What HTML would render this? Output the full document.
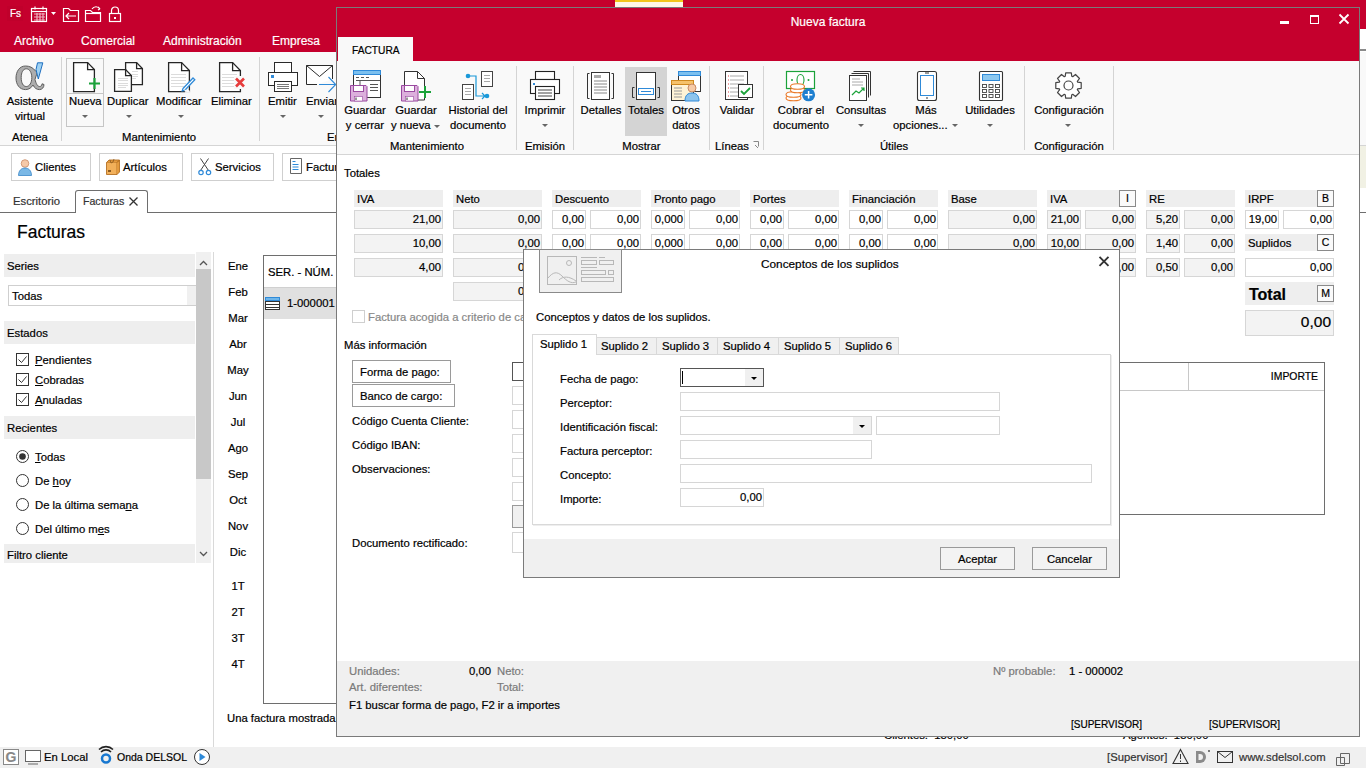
<!DOCTYPE html>
<html><head><meta charset="utf-8">
<style>
*{box-sizing:border-box;margin:0;padding:0}
html,body{width:1366px;height:768px;overflow:hidden}
body{position:relative;background:#fff;font-family:"Liberation Sans",sans-serif;font-size:11.3px;color:#000;-webkit-text-stroke:0.2px currentColor}
.a{position:absolute}
.t{position:absolute;white-space:nowrap;line-height:14px}
.w{color:#fff}
.g{color:#777}
.c{text-align:center}
.r{text-align:right}
.hd{position:absolute;background:#eeeeee}
.fld{position:absolute;border:1px solid #d6d6d6;background:#fff;height:19px;line-height:17px;text-align:right;padding-right:1px;white-space:nowrap}
.ro{background:#f3f3f3}
.btn{position:absolute;border:1px solid #adadad;background:#f0f0f0;text-align:center;white-space:nowrap}
.sep{position:absolute;width:1px;background:#d4d4d4}
.arr{position:absolute;width:0;height:0;border-left:3px solid transparent;border-right:3px solid transparent;border-top:3px solid #666}
svg{position:absolute;overflow:visible}
</style></head><body>

<!-- ============ BACKGROUND APP ============ -->
<div class="a" style="left:0;top:0;width:1366px;height:52px;background:#c5002d"></div>
<div class="a" style="left:615px;top:0;width:68px;height:7px;background:#fff8e6"></div>
<div class="a" style="left:615px;top:0;width:68px;height:2px;background:#f2c51b"></div>
<!-- quick access -->
<div class="a" style="left:7px;top:6px;width:16px;height:15px;background:#c0002b"></div>
<div class="t w" style="left:10px;top:7px;font-size:10px;line-height:14px">Fs</div>
<svg style="left:0;top:0" width="130" height="30">
 <g fill="none" stroke="#fff" stroke-width="1.2">
  <rect x="31.5" y="8.5" width="15" height="13"/><line x1="31.5" y1="11.5" x2="46.5" y2="11.5"/>
  <line x1="35" y1="6.5" x2="35" y2="9.5"/><line x1="43" y1="6.5" x2="43" y2="9.5"/>
  <path d="M34 14h11M34 17h11M34 20h11M37 13v8M40 13v8M43 13v8" stroke-opacity=".7"/>
  <path d="M63.5 21.5v-13h5l2 2h8v11z"/><path d="M76 16h-10M69 13l-3 3 3 3"/>
  <path d="M85.5 21.5v-11h5l2 2h8v9z"/><path d="M86 13.5h14"/><path d="M92 9c2-3 6-3 8 0M100 9l-2-2M100 9l-2 1"/>
  <rect x="109.5" y="13.5" width="11" height="8"/><path d="M111.5 13.5v-3a3.5 3.5 0 0 1 7 0v3"/>
 </g>
 <path d="M51 12h5l-2.5 3z" fill="#fff"/>
 <rect x="114" y="17" width="2" height="2" fill="#fff"/>
</svg>
<div class="t w" style="left:14px;top:34px;font-size:12px">Archivo</div>
<div class="t w" style="left:81px;top:34px;font-size:12px">Comercial</div>
<div class="t w" style="left:163px;top:34px;font-size:12px">Administración</div>
<div class="t w" style="left:272px;top:34px;font-size:12px">Empresa</div>

<!-- ribbon -->
<div class="a" style="left:0;top:52px;width:1366px;height:94px;background:#f9f9f9;border-bottom:1px solid #d5d5d5"></div>
<div class="sep" style="left:61px;top:57px;height:84px"></div>
<div class="sep" style="left:259px;top:57px;height:84px"></div>
<div class="a" style="left:66px;top:58px;width:38px;height:69px;border:1px solid #c6c6c6"></div>
<div class="a" style="left:67px;top:93px;width:36px;height:1px;background:#c6c6c6"></div>
<div class="t c" style="left:0;top:94px;width:60px">Asistente</div>
<div class="t c" style="left:0;top:109px;width:60px">virtual</div>
<div class="t c" style="left:0;top:130px;width:60px">Atenea</div>
<div class="t" style="left:69px;top:94px">Nueva</div>
<div class="t" style="left:107px;top:94px">Duplicar</div>
<div class="t" style="left:156px;top:94px">Modificar</div>
<div class="t" style="left:211px;top:94px">Eliminar</div>
<div class="t" style="left:268px;top:94px">Emitir</div>
<div class="t" style="left:306px;top:94px">Enviar</div>
<div class="t" style="left:122px;top:130px">Mantenimiento</div>
<div class="t" style="left:327px;top:130px">En</div>
<div class="arr" style="left:82px;top:115px"></div>
<div class="arr" style="left:126px;top:115px"></div>
<div class="arr" style="left:178px;top:115px"></div>
<div class="arr" style="left:280px;top:115px"></div>
<div class="arr" style="left:318px;top:115px"></div>
<svg style="left:0;top:0" width="340" height="100">
 <!-- alpha -->
 <path fill-rule="evenodd" d="M35.5 71C33 67.5 29.5 66 25.5 66C19.5 66 16 71.5 16 78C16 84.5 19.5 89.6 25.5 89.6C29 89.6 31.5 87.5 33 85C34.5 88 36.5 89.6 39.5 89.6C42 89.6 44 87.5 44 84.5L42 83.8C42 85.5 41 86.5 39.5 86.5C37.5 86.5 36 83.5 35 79.5C36 76 37 73 38 71ZM26.3 68.8C23 68.8 21.2 72.5 21.2 77.6C21.2 82.8 23 86.5 26.3 86.5C29.5 86.5 31.8 82.8 31.8 77.6C31.8 72.5 29.5 68.8 26.3 68.8Z" fill="#adadad" stroke="#5e5e5e" stroke-width="1"/>
 <path d="M37.5 62.8H42.8L38.3 79L36 69.5Z" fill="#9fd2f3" stroke="#1f6fc0" stroke-width="1"/>
 <!-- docs -->
 <g fill="#fff" stroke="#262626" stroke-width="1.3">
  <path d="M73.6 62.6h14l6.8 7v22h-20.8z"/><path d="M87.6 62.6v7h6.8" fill="none"/>
  <path d="M125.6 62.6h11l5.8 6v16h-16.8z"/><path d="M136.6 62.6v6h5.8" fill="none"/>
  <path d="M114.6 69.6h11l5.8 6v15.8h-16.8z"/><path d="M125.6 69.6v6h5.8" fill="none"/>
  <path d="M168.6 62.6h13l7.8 8v21h-20.8z"/><path d="M181.6 62.6v8h7.8" fill="none"/>
  <path d="M219.6 62.6h13l7.8 8v21h-20.8z"/><path d="M232.6 62.6v8h7.8" fill="none"/>
 </g>
 <g stroke="#dcdcdc" stroke-width="1"><path d="M171 74.5h15M171 77.5h15M171 80.5h15M171 83.5h15M171 86.5h15M222 74.5h15M222 77.5h15M222 80.5h15M222 83.5h15M222 86.5h15M118 78.5h10M118 80.5h10M118 83.5h10M118 85.5h10M118 87.5h8M132 71.5h6M132 74.5h6M132 76.5h6M132 78.5h4"/></g>
 <path d="M89 83.5h11M94.5 78v11" stroke="#1ba23a" stroke-width="2.2"/>
 <path d="M183 88.5l10-10.5 1.8 1.8-10 10.5-2.6.6z" fill="#fff" stroke="#2f8ad8" stroke-width="1.3"/>
 <path d="M185 92h5M184.5 90.5l5 .5" stroke="#f9f9f9" stroke-width="1.6"/>
 <rect x="234" y="76" width="13" height="13" fill="#f9f9f9"/>
 <path d="M236 78.5l8 8M244 78.5l-8 8" stroke="#e63b3b" stroke-width="2.6"/>
 <!-- printer -->
 <g fill="#fff" stroke="#2a2a2a" stroke-width="1">
  <rect x="274.5" y="62.5" width="17" height="10"/><rect x="268.5" y="72.5" width="29" height="13"/><rect x="274.5" y="81.5" width="17" height="10"/>
 </g>
 <path d="M277 84.5h12M277 86.5h12M277 88.5h12" stroke="#555" stroke-width=".8"/>
 <rect x="271" y="75" width="3" height="3" fill="#2f8ad8"/>
 <!-- envelope -->
 <path d="M317 84.5h-10.5v-19h26v13.5" fill="#fff" stroke="#2a2a2a" stroke-width="1"/>
 <path d="M306.5 65.5l13 11 13-11" fill="none" stroke="#2a2a2a" stroke-width="1"/>
 <path d="M319 84.5h16.5M328.5 77l7.2 7.5-7.2 7.5" fill="none" stroke="#2f8ad8" stroke-width="1.1"/>
</svg>

<div class="a" style="left:1360px;top:29px;width:6px;height:20px;background:#fff"></div>
<div class="a" style="left:1360px;top:49px;width:6px;height:2px;background:#8a8a8a"></div>
<div class="a" style="left:1360px;top:51px;width:6px;height:1px;background:#fff"></div>
<div class="a" style="left:1360px;top:146px;width:6px;height:42px;background:#f1f1e4"></div>
<!-- shortcut buttons -->
<div class="a" style="left:11px;top:153px;width:80px;height:28px;border:1px solid #cfcfcf;background:#fff"></div>
<div class="a" style="left:99px;top:153px;width:84px;height:28px;border:1px solid #cfcfcf;background:#fff"></div>
<div class="a" style="left:191px;top:153px;width:83px;height:28px;border:1px solid #cfcfcf;background:#fff"></div>
<div class="a" style="left:282px;top:153px;width:70px;height:28px;border:1px solid #cfcfcf;background:#fff"></div>
<div class="t" style="left:35px;top:160px">Clientes</div>
<div class="t" style="left:123px;top:160px">Artículos</div>
<div class="t" style="left:215px;top:160px">Servicios</div>
<div class="t" style="left:306px;top:160px">Facturas</div>
<svg style="left:0;top:150px" width="340" height="35">
 <circle cx="25" cy="13.5" r="3.8" fill="#f6c9a8" stroke="#c98a64" stroke-width=".8"/>
 <path d="M18.5 25.5c0-5 3-7.5 6.5-7.5s6.5 2.5 6.5 7.5z" fill="#7ab8e6" stroke="#3a86c8" stroke-width=".8"/>
 <path d="M106.5 12.5h10.5v12h-10.5z" fill="#f2b05a" stroke="#b57022" stroke-width=".9"/>
 <path d="M106.5 12.5l2.5-2.5h10.5l-2.5 2.5M117 12.5l2.5-2.5v12l-2.5 2.5" fill="#e39a3e" stroke="#b57022" stroke-width=".9"/>
 <path d="M110 10l1 3 2-1 1-3" fill="none" stroke="#8a5a20" stroke-width=".8"/>
 <rect x="108" y="20" width="3" height="2" fill="#8a5a20"/>
 <path d="M200.5 8.5l8 12M208.5 8.5l-8 12" stroke="#444" stroke-width="1"/>
 <circle cx="201" cy="22.5" r="2.2" fill="none" stroke="#2f8ad8" stroke-width="1.2"/>
 <circle cx="208.5" cy="22.5" r="2.2" fill="none" stroke="#2f8ad8" stroke-width="1.2"/>
 <path d="M290.5 8.5h11v15h-11z" fill="#fff" stroke="#666"/>
 <path d="M292.5 11.5h3M292.5 14.5h6M292.5 17h6M292.5 19.5h6" stroke="#2f8ad8"/>
</svg>

<!-- tabs -->
<div class="a" style="left:0;top:212px;width:1366px;height:1px;background:#6e6e6e"></div>
<div class="a" style="left:75px;top:190px;width:73px;height:23px;border:1px solid #6e6e6e;border-bottom:none;border-radius:3px 3px 0 0;background:#fff"></div>
<div class="t" style="left:13px;top:194px;color:#333">Escritorio</div>
<div class="t" style="left:83px;top:194px;color:#333;font-size:10.6px">Facturas</div>
<svg style="left:0;top:190px" width="150" height="25"><path d="M129.5 7.5l8 8M137.5 7.5l-8 8" stroke="#333" stroke-width="1.3"/></svg>
<div class="t" style="left:17px;top:222px;font-size:17.5px;line-height:20px">Facturas</div>

<!-- left panel -->
<div class="hd" style="left:4px;top:254px;width:191px;height:23px"></div>
<div class="t" style="left:7px;top:259px">Series</div>
<div class="a" style="left:8px;top:285px;width:188px;height:21px;border:1px solid #cfcfcf;background:#fff"></div>
<div class="a" style="left:187px;top:286px;width:9px;height:19px;background:#f0f0f0"></div>
<div class="t" style="left:12px;top:289px">Todas</div>
<div class="hd" style="left:4px;top:321px;width:191px;height:23px"></div>
<div class="t" style="left:7px;top:326px">Estados</div>
<div class="hd" style="left:4px;top:416px;width:191px;height:23px"></div>
<div class="t" style="left:7px;top:421px">Recientes</div>
<div class="hd" style="left:4px;top:544px;width:191px;height:19px"></div>
<div class="t" style="left:7px;top:548px">Filtro cliente</div>
<!-- scrollbar -->
<div class="a" style="left:196px;top:252px;width:15px;height:311px;background:#f0f0f0"></div>
<div class="a" style="left:196px;top:269px;width:15px;height:210px;background:#c8c8c8"></div>
<svg style="left:196px;top:252px" width="15" height="311">
 <path d="M4 13l3.5-3.5 3.5 3.5" fill="none" stroke="#555" stroke-width="1.3"/>
 <path d="M4 300l3.5 3.5 3.5-3.5" fill="none" stroke="#555" stroke-width="1.3"/>
</svg>
<div class="a" style="left:213px;top:252px;width:1px;height:495px;background:#d9d9d9"></div>
<!-- checkboxes -->
<svg style="left:0;top:340px" width="40" height="200">
 <g fill="#fff" stroke="#333" stroke-width="1">
  <rect x="16.5" y="13.5" width="12" height="12"/><rect x="16.5" y="33.5" width="12" height="12"/><rect x="16.5" y="53.5" width="12" height="12"/>
  <circle cx="22.5" cy="116.5" r="6"/><circle cx="22.5" cy="140.5" r="6"/><circle cx="22.5" cy="164.5" r="6"/><circle cx="22.5" cy="188.5" r="6"/>
 </g>
 <path d="M18.5 19.5l3 3 5-6M18.5 39.5l3 3 5-6M18.5 59.5l3 3 5-6" fill="none" stroke="#333" stroke-width="1"/>
 <circle cx="22.5" cy="116.5" r="3.3" fill="#333"/>
</svg>
<div class="t" style="left:35px;top:353px"><u>P</u>endientes</div>
<div class="t" style="left:35px;top:373px"><u>C</u>obradas</div>
<div class="t" style="left:35px;top:393px"><u>A</u>nuladas</div>
<div class="t" style="left:35px;top:450px"><u>T</u>odas</div>
<div class="t" style="left:35px;top:474px">De <u>h</u>oy</div>
<div class="t" style="left:35px;top:498px">De la última sema<u>n</u>a</div>
<div class="t" style="left:35px;top:522px">Del último m<u>e</u>s</div>

<!-- months -->
<div class="t c" style="left:218px;top:259px;width:40px">Ene</div>
<div class="t c" style="left:218px;top:285px;width:40px">Feb</div>
<div class="t c" style="left:218px;top:311px;width:40px">Mar</div>
<div class="t c" style="left:218px;top:337px;width:40px">Abr</div>
<div class="t c" style="left:218px;top:363px;width:40px">May</div>
<div class="t c" style="left:218px;top:389px;width:40px">Jun</div>
<div class="t c" style="left:218px;top:415px;width:40px">Jul</div>
<div class="t c" style="left:218px;top:441px;width:40px">Ago</div>
<div class="t c" style="left:218px;top:467px;width:40px">Sep</div>
<div class="t c" style="left:218px;top:493px;width:40px">Oct</div>
<div class="t c" style="left:218px;top:519px;width:40px">Nov</div>
<div class="t c" style="left:218px;top:545px;width:40px">Dic</div>
<div class="t c" style="left:218px;top:579px;width:40px">1T</div>
<div class="t c" style="left:218px;top:605px;width:40px">2T</div>
<div class="t c" style="left:218px;top:631px;width:40px">3T</div>
<div class="t c" style="left:218px;top:657px;width:40px">4T</div>

<!-- grid -->
<div class="a" style="left:263px;top:255px;width:100px;height:449px;border:1px solid #6e6e6e;background:#fff"></div>
<div class="a" style="left:264px;top:287px;width:99px;height:1px;background:#d0d0d0"></div>
<div class="a" style="left:264px;top:288px;width:99px;height:31px;background:#e0e0e0"></div>
<div class="t" style="left:268px;top:265px">SER. - NÚM.</div>
<div class="t" style="left:287px;top:296px">1-000001</div>
<svg style="left:264px;top:295px" width="20" height="20">
 <rect x="1.5" y="2.5" width="14" height="12" fill="#fff" stroke="#333"/>
 <path d="M1.5 6.5h14M1.5 9.5h14M1.5 12.5h14" stroke="#333"/>
 <rect x="1.5" y="2.5" width="14" height="3" fill="#6fb6ea" stroke="#2f8ad8"/>
</svg>
<div class="t" style="left:227px;top:711px">Una factura mostrada</div>
<div class="t" style="left:884px;top:728px">Clientes:&nbsp;&nbsp;150,00</div>
<div class="t" style="left:1123px;top:728px">Agentes:&nbsp;&nbsp;150,00</div>

<!-- status bar -->
<div class="a" style="left:0;top:747px;width:1366px;height:21px;background:#f0f0f0"></div>
<div class="a" style="left:3px;top:749px;width:16px;height:16px;border:1px solid #888;background:#fff"></div>
<div class="t" style="left:4px;top:749px;font-size:14px;line-height:16px;color:#888;width:14px;text-align:center;font-weight:bold">G</div>
<svg style="left:0;top:745px" width="220" height="23">
 <rect x="25.5" y="5.5" width="15" height="11" fill="#fff" stroke="#666"/>
 <path d="M28 19h10" stroke="#666"/>
 <circle cx="106" cy="13.5" r="4" fill="none" stroke="#1878d0" stroke-width="2.5"/>
 <path d="M101 7a7 7 0 0 1 10 0M99 4.5a10 10 0 0 1 14 0" fill="none" stroke="#222" stroke-width="1.6"/>
 <circle cx="202" cy="12" r="7.5" fill="#fff" stroke="#333"/>
 <path d="M199.5 8v8l6-4z" fill="#2f8ad8"/>
</svg>
<div class="t" style="left:44px;top:750px">En Local</div>
<div class="t" style="left:117px;top:750px;font-size:10.5px">Onda DELSOL</div>
<div class="t" style="left:1107px;top:750px;color:#333">[Supervisor]</div>
<div class="t" style="left:1239px;top:750px;color:#333">www.sdelsol.com</div>
<svg style="left:1160px;top:745px" width="206" height="23">
 <path d="M20.5 4.5l7.5 14h-15z" fill="none" stroke="#333" stroke-width="1.1"/><path d="M20.5 9v5M20.5 15.5v1.5" stroke="#333"/>
 <path d="M36 6h4a6 6 0 0 1 0 12h-4z" fill="#8a8a8a"/><path d="M38.5 9h1.5a3 3 0 0 1 0 6h-1.5z" fill="#f0f0f0"/><rect x="48" y="5" width="2" height="2" fill="#777"/>
 <rect x="57.5" y="6.5" width="15" height="11" fill="none" stroke="#333"/><path d="M57.5 6.5l7.5 6 7.5-6" fill="none" stroke="#333"/>
 <path d="M180.5 8.5h9v10h-9zM176.5 12.5h8v8h-8z" fill="#f0f0f0" stroke="#666"/>
</svg>

<!-- ============ DIALOG NUEVA FACTURA ============ -->
<div class="a" style="left:336px;top:7px;width:1024px;height:730px;border:1px solid #7a7a7a;background:#fff"></div>
<div class="a" style="left:337px;top:8px;width:1022px;height:53px;background:#c5002d"></div>
<div class="t w c" style="left:337px;top:15px;width:982px;font-size:12px">Nueva factura</div>
<div class="a" style="left:1280px;top:21px;width:9px;height:3px;background:#fff"></div>
<div class="a" style="left:1310px;top:15px;width:9px;height:9px;border:1px solid #fff;border-top-width:2px"></div>
<svg style="left:1330px;top:8px" width="30" height="30"><path d="M9.5 6.5l9 9M18.5 6.5l-9 9" stroke="#fff" stroke-width="1.8"/></svg>
<div class="a" style="left:338px;top:37px;width:75px;height:24px;background:#f9f9f9"></div>
<div class="t" style="left:352px;top:44px;font-size:10.2px">FACTURA</div>
<!-- ribbon -->
<div class="a" style="left:337px;top:61px;width:1022px;height:94px;background:#f9f9f9;border-bottom:1px solid #d5d5d5"></div>
<div class="sep" style="left:516px;top:66px;height:84px"></div>
<div class="sep" style="left:573px;top:66px;height:84px"></div>
<div class="sep" style="left:709px;top:66px;height:84px"></div>
<div class="sep" style="left:763px;top:66px;height:84px"></div>
<div class="sep" style="left:1024px;top:66px;height:84px"></div>
<div class="sep" style="left:1113px;top:66px;height:84px"></div>
<div class="a" style="left:625px;top:67px;width:42px;height:69px;background:#d4d4d4"></div>
<div class="t c" style="left:335px;top:103px;width:60px">Guardar</div>
<div class="t c" style="left:335px;top:118px;width:60px">y cerrar</div>
<div class="t c" style="left:386px;top:103px;width:60px">Guardar</div>
<div class="t" style="left:391px;top:118px">y nueva</div>
<div class="arr" style="left:434px;top:125px"></div>
<div class="t c" style="left:438px;top:103px;width:80px">Historial del</div>
<div class="t c" style="left:438px;top:118px;width:80px">documento</div>
<div class="t c" style="left:518px;top:103px;width:54px">Imprimir</div>
<div class="arr" style="left:542px;top:124px"></div>
<div class="t c" style="left:577px;top:103px;width:48px">Detalles</div>
<div class="t c" style="left:622px;top:103px;width:48px">Totales</div>
<div class="t c" style="left:665px;top:103px;width:42px">Otros</div>
<div class="t c" style="left:665px;top:118px;width:42px">datos</div>
<div class="t c" style="left:712px;top:103px;width:50px">Validar</div>
<div class="t c" style="left:766px;top:103px;width:70px">Cobrar el</div>
<div class="t c" style="left:766px;top:118px;width:70px">documento</div>
<div class="t c" style="left:831px;top:103px;width:60px">Consultas</div>
<div class="arr" style="left:858px;top:124px"></div>
<div class="t c" style="left:896px;top:103px;width:60px">Más</div>
<div class="t" style="left:893px;top:118px">opciones...</div>
<div class="arr" style="left:952px;top:124px"></div>
<div class="t c" style="left:960px;top:103px;width:60px">Utilidades</div>
<div class="arr" style="left:987px;top:124px"></div>
<div class="t c" style="left:1026px;top:103px;width:86px">Configuración</div>
<div class="arr" style="left:1065px;top:124px"></div>
<div class="t c" style="left:338px;top:139px;width:178px">Mantenimiento</div>
<div class="t c" style="left:517px;top:139px;width:56px">Emisión</div>
<div class="t c" style="left:574px;top:139px;width:135px">Mostrar</div>
<div class="t" style="left:715px;top:139px">Líneas</div>
<div class="t c" style="left:764px;top:139px;width:260px">Útiles</div>
<div class="t c" style="left:1025px;top:139px;width:88px">Configuración</div>
<svg style="left:0;top:0" width="1366" height="160">
 <!-- dialog launcher -->
 <path d="M753.5 141.5h5v5M755 145l3 3" fill="none" stroke="#888"/>
 <!-- guardar y cerrar -->
 <rect x="353.5" y="70.5" width="27" height="27" fill="#fff" stroke="#333"/>
 <rect x="353.5" y="70.5" width="27" height="4" fill="#7cc0ef" stroke="#2f8ad8"/>
 <path d="M356 77.5h3M361 77.5h3M366 77.5h3M356 80.5h24M360 80.5v6M370 84.5h8M370 87.5h8M370 90.5h8" stroke="#555"/>
 <path d="M350.5 85.5h15.5l1 1v14.5h-16.5z" fill="#dcb0dc" stroke="#9a4aa0"/>
 <rect x="353.5" y="85.5" width="10" height="6" fill="#fff" stroke="#9a4aa0"/><rect x="354.5" y="96.5" width="8" height="4.5" fill="#fff" stroke="#9a4aa0" stroke-width=".6"/><path d="M356 97.5v2.5" stroke="#333"/>
 <!-- guardar y nueva -->
 <path d="M404.5 71.5h13l7 7v21.5h-20z" fill="#fff" stroke="#333"/><path d="M417.5 71.5v7h7" fill="none" stroke="#333"/>
 <path d="M401.5 85.5h15.5l1 1v14.5h-16.5z" fill="#dcb0dc" stroke="#9a4aa0"/>
 <rect x="404.5" y="85.5" width="10" height="6" fill="#fff" stroke="#9a4aa0"/><rect x="405.5" y="96.5" width="8" height="4.5" fill="#fff" stroke="#9a4aa0" stroke-width=".6"/><path d="M407 97.5v2.5" stroke="#333"/>
 <path d="M419 92h12M425 86v12" stroke="#1ba23a" stroke-width="2"/>
 <!-- historial -->
 <rect x="462.5" y="84.5" width="11" height="15" fill="#fff" stroke="#444"/>
 <rect x="481.5" y="71.5" width="11" height="15" fill="#fff" stroke="#444"/>
 <path d="M465 88.5h6M465 91.5h6M465 94.5h6M484 75.5h6M484 78.5h6M484 81.5h6" stroke="#aaa"/>
 <circle cx="468" cy="76" r="2.3" fill="#1a98d8"/><circle cx="487" cy="96" r="2.3" fill="#1a98d8"/>
 <path d="M468 76h8v20h10M482 93l3 3-3 3" fill="none" stroke="#1a98d8" stroke-width="1.2"/>
 <!-- imprimir -->
 <g fill="#fff" stroke="#222" stroke-width="1.1">
  <rect x="535.5" y="71.5" width="19" height="8"/><rect x="530.5" y="79.5" width="29" height="14"/><rect x="535.5" y="86.5" width="19" height="13"/>
 </g>
 <path d="M538 90h14M538 93h14M538 96h14" stroke="#444"/>
 <rect x="533" y="83" width="2" height="2" fill="#2f8ad8"/>
 <!-- detalles -->
 <path d="M589.5 73.5h-2v25h2M611.5 73.5h2v25h-2" fill="none" stroke="#333"/>
 <rect x="591.5" y="72.5" width="18" height="27" fill="#fff" stroke="#333"/>
 <rect x="594" y="75" width="7" height="3" fill="#aaa"/>
 <path d="M594 81h13M594 84h13M594 87h13M594 90h13M594 93h13" stroke="#888"/>
 <!-- totales -->
 <path d="M634.5 87.5h-2v10h2M657.5 87.5h2v10h-2" fill="none" stroke="#333"/>
 <rect x="636.5" y="72.5" width="19" height="27" fill="#fff" stroke="#333"/>
 <rect x="638.5" y="88.5" width="15" height="6" fill="#fff" stroke="#2f8ad8"/>
 <path d="M641 91.5h10" stroke="#2f8ad8"/>
 <!-- otros datos -->
 <rect x="678.5" y="71.5" width="22" height="20" fill="#fff" stroke="#333"/>
 <rect x="678.5" y="71.5" width="22" height="4" fill="#7cc0ef" stroke="#2f8ad8"/>
 <rect x="671.5" y="80.5" width="22" height="20" fill="#fff3d6" stroke="#333"/>
 <rect x="671.5" y="80.5" width="22" height="4" fill="#f6c26b" stroke="#d08a20"/>
 <path d="M674 88h8M674 91h8M674 94h8M674 97h8" stroke="#999"/>
 <circle cx="692" cy="88" r="4" fill="#f6cba8" stroke="#c98a64"/>
 <path d="M685 101c0-6 3-8 7-8s7 2 7 8z" fill="#8dc4ee" stroke="#2f8ad8"/>
 <!-- validar -->
 <rect x="725.5" y="71.5" width="22" height="28" fill="#fff" stroke="#333"/>
 <path d="M730 76h14M730 80h14M730 84h14M730 88h10M730 92h10M730 96h10" stroke="#aaa"/>
 <path d="M728 76h1M728 80h1M728 84h1M728 88h1M728 92h1M728 96h1" stroke="#d44"/>
 <rect x="738.5" y="84.5" width="14" height="13" fill="#fff" stroke="#333"/>
 <path d="M741 91l3 3 6-6" fill="none" stroke="#1ba23a" stroke-width="1.8"/>
 <!-- cobrar -->
 <rect x="786.5" y="71.5" width="28" height="17" fill="#fff" stroke="#1ba23a" stroke-width="1.2"/>
 <ellipse cx="800.5" cy="80" rx="3.5" ry="5.5" fill="none" stroke="#1ba23a" stroke-width="1.1"/>
 <circle cx="792" cy="80" r="1" fill="#1ba23a"/><circle cx="808.5" cy="80" r="1" fill="#1ba23a"/>
 <g fill="#fff" stroke="#ea7a2a" stroke-width="1.1"><ellipse cx="793.5" cy="98" rx="7.5" ry="2.8"/><ellipse cx="793.5" cy="94.5" rx="7.5" ry="2.8"/><ellipse cx="797.5" cy="90" rx="7" ry="2.8"/><ellipse cx="797.5" cy="86.5" rx="7" ry="2.8"/></g>
 <circle cx="808.6" cy="94.8" r="6.5" fill="#1e7fd0"/>
 <path d="M804.8 94.8h7.6M808.6 91v7.6" stroke="#fff" stroke-width="1.5"/>
 <!-- consultas -->
 <path d="M853.5 71.5h17v24M851.5 73.5h17v24" fill="none" stroke="#333"/>
 <rect x="849.5" y="75.5" width="17" height="25" fill="#fff" stroke="#333"/>
 <path d="M852 79h8M852 82h11M852 85h11" stroke="#aaa"/>
 <path d="M852 95l4-4 3 2 5-5M861 88h3v3" fill="none" stroke="#1ba23a" stroke-width="1.2"/>
 <!-- mas opciones -->
 <rect x="917.5" y="71.5" width="19" height="29" rx="2" fill="#fff" stroke="#333" stroke-width="1.1"/>
 <rect x="920.5" y="75.5" width="13" height="20" fill="#fff" stroke="#2f8ad8"/>
 <path d="M925 73h4M926 98h2" stroke="#333"/>
 <!-- utilidades -->
 <rect x="979.5" y="71.5" width="23" height="29" rx="1" fill="#fff" stroke="#333" stroke-width="1.1"/>
 <rect x="982.5" y="74.5" width="17" height="6" fill="#8cc8f0" stroke="#2f8ad8"/>
 <g fill="none" stroke="#444" stroke-width=".9"><rect x="982.5" y="84.5" width="4" height="3"/><rect x="989" y="84.5" width="4" height="3"/><rect x="995.5" y="84.5" width="4" height="3"/><rect x="982.5" y="89.5" width="4" height="3"/><rect x="989" y="89.5" width="4" height="3"/><rect x="995.5" y="89.5" width="4" height="3"/><rect x="982.5" y="94.5" width="4" height="3"/><rect x="989" y="94.5" width="4" height="3"/><rect x="995.5" y="94.5" width="4" height="3"/></g>
 <!-- config gear -->
 <path d="M1077.7 82.2 L1081.2 82.7 L1081.2 88.3 L1077.7 88.8 L1077.3 89.7 L1079.5 92.5 L1075.5 96.5 L1072.7 94.3 L1071.8 94.7 L1071.3 98.2 L1065.7 98.2 L1065.2 94.7 L1064.3 94.3 L1061.5 96.5 L1057.5 92.5 L1059.7 89.7 L1059.3 88.8 L1055.8 88.3 L1055.8 82.7 L1059.3 82.2 L1059.7 81.3 L1057.5 78.5 L1061.5 74.5 L1064.3 76.7 L1065.2 76.3 L1065.7 72.8 L1071.3 72.8 L1071.8 76.3 L1072.7 76.7 L1075.5 74.5 L1079.5 78.5 L1077.3 81.3Z" fill="#fff" stroke="#444" stroke-width="1.2" stroke-linejoin="round"/><circle cx="1068.5" cy="85.5" r="4.5" fill="#fff" stroke="#444" stroke-width="1.2"/>
</svg>
<!-- content -->
<div class="t" style="left:344px;top:166px">Totales</div>
<div class="hd" style="left:354px;top:190px;width:89px;height:17px"></div>
<div class="t" style="left:357px;top:192px">IVA</div>
<div class="hd" style="left:453px;top:190px;width:89px;height:17px"></div>
<div class="t" style="left:456px;top:192px">Neto</div>
<div class="hd" style="left:552px;top:190px;width:89px;height:17px"></div>
<div class="t" style="left:555px;top:192px">Descuento</div>
<div class="hd" style="left:651px;top:190px;width:89px;height:17px"></div>
<div class="t" style="left:654px;top:192px">Pronto pago</div>
<div class="hd" style="left:750px;top:190px;width:89px;height:17px"></div>
<div class="t" style="left:753px;top:192px">Portes</div>
<div class="hd" style="left:849px;top:190px;width:89px;height:17px"></div>
<div class="t" style="left:852px;top:192px">Financiación</div>
<div class="hd" style="left:948px;top:190px;width:89px;height:17px"></div>
<div class="t" style="left:951px;top:192px">Base</div>
<div class="hd" style="left:1047px;top:190px;width:89px;height:17px"></div>
<div class="t" style="left:1050px;top:192px">IVA</div>
<div class="hd" style="left:1146px;top:190px;width:89px;height:17px"></div>
<div class="t" style="left:1149px;top:192px">RE</div>
<div class="hd" style="left:1245px;top:190px;width:89px;height:17px"></div>
<div class="t" style="left:1248px;top:192px">IRPF</div>
<div class="fld ro" style="left:354px;top:210px;width:89px">21,00</div>
<div class="fld ro" style="left:354px;top:234px;width:89px">10,00</div>
<div class="fld ro" style="left:354px;top:258px;width:89px">4,00</div>
<div class="fld ro" style="left:453px;top:210px;width:89px">0,00</div>
<div class="fld ro" style="left:453px;top:234px;width:89px">0,00</div>
<div class="fld ro" style="left:453px;top:258px;width:89px">0,00</div>
<div class="fld ro" style="left:453px;top:282px;width:89px">0,00</div>
<div class="fld" style="left:552px;top:210px;width:34px">0,00</div>
<div class="fld" style="left:590px;top:210px;width:51px">0,00</div>
<div class="fld" style="left:651px;top:210px;width:34px">0,000</div>
<div class="fld" style="left:689px;top:210px;width:51px">0,00</div>
<div class="fld" style="left:750px;top:210px;width:34px">0,00</div>
<div class="fld" style="left:788px;top:210px;width:51px">0,00</div>
<div class="fld" style="left:849px;top:210px;width:34px">0,00</div>
<div class="fld" style="left:887px;top:210px;width:51px">0,00</div>
<div class="fld ro" style="left:948px;top:210px;width:89px">0,00</div>
<div class="fld" style="left:552px;top:234px;width:34px">0,00</div>
<div class="fld" style="left:590px;top:234px;width:51px">0,00</div>
<div class="fld" style="left:651px;top:234px;width:34px">0,000</div>
<div class="fld" style="left:689px;top:234px;width:51px">0,00</div>
<div class="fld" style="left:750px;top:234px;width:34px">0,00</div>
<div class="fld" style="left:788px;top:234px;width:51px">0,00</div>
<div class="fld" style="left:849px;top:234px;width:34px">0,00</div>
<div class="fld" style="left:887px;top:234px;width:51px">0,00</div>
<div class="fld ro" style="left:948px;top:234px;width:89px">0,00</div>
<div class="fld" style="left:552px;top:258px;width:34px">0,00</div>
<div class="fld" style="left:590px;top:258px;width:51px">0,00</div>
<div class="fld" style="left:651px;top:258px;width:34px">0,000</div>
<div class="fld" style="left:689px;top:258px;width:51px">0,00</div>
<div class="fld" style="left:750px;top:258px;width:34px">0,00</div>
<div class="fld" style="left:788px;top:258px;width:51px">0,00</div>
<div class="fld" style="left:849px;top:258px;width:34px">0,00</div>
<div class="fld" style="left:887px;top:258px;width:51px">0,00</div>
<div class="fld ro" style="left:948px;top:258px;width:89px">0,00</div>
<div class="fld ro" style="left:552px;top:282px;width:89px">0,00</div>
<div class="fld ro" style="left:1047px;top:210px;width:34px">21,00</div>
<div class="fld ro" style="left:1085px;top:210px;width:51px">0,00</div>
<div class="fld ro" style="left:1047px;top:234px;width:34px">10,00</div>
<div class="fld ro" style="left:1085px;top:234px;width:51px">0,00</div>
<div class="fld ro" style="left:1047px;top:258px;width:34px">4,00</div>
<div class="fld ro" style="left:1085px;top:258px;width:51px">0,00</div>
<div class="fld ro" style="left:1146px;top:210px;width:34px">5,20</div>
<div class="fld ro" style="left:1184px;top:210px;width:51px">0,00</div>
<div class="fld ro" style="left:1146px;top:234px;width:34px">1,40</div>
<div class="fld ro" style="left:1184px;top:234px;width:51px">0,00</div>
<div class="fld ro" style="left:1146px;top:258px;width:34px">0,50</div>
<div class="fld ro" style="left:1184px;top:258px;width:51px">0,00</div>
<div class="fld" style="left:1245px;top:210px;width:34px">19,00</div>
<div class="fld" style="left:1283px;top:210px;width:51px">0,00</div>
<div class="hd" style="left:1245px;top:234px;width:89px;height:17px"></div>
<div class="t" style="left:1248px;top:236px">Suplidos</div>
<div class="fld" style="left:1245px;top:258px;width:89px">0,00</div>
<div class="hd" style="left:1245px;top:282px;width:89px;height:23px"></div>
<div class="t" style="left:1249px;top:285px;font-size:16px;font-weight:bold;line-height:20px">Total</div>
<div class="fld ro" style="left:1245px;top:310px;width:89px;height:26px;line-height:21px;font-size:15.5px;padding-right:2px">0,00</div>
<div class="btn" style="left:1119px;top:190px;width:17px;height:17px;line-height:15px;font-size:10.5px;background:#fafafa;border-color:#8a8a8a">I</div>
<div class="btn" style="left:1317px;top:190px;width:17px;height:17px;line-height:15px;font-size:10.5px;background:#fafafa;border-color:#8a8a8a">B</div>
<div class="btn" style="left:1317px;top:234px;width:17px;height:17px;line-height:15px;font-size:10.5px;background:#fafafa;border-color:#8a8a8a">C</div>
<div class="btn" style="left:1317px;top:285px;width:17px;height:17px;line-height:15px;font-size:10.5px;background:#fafafa;border-color:#8a8a8a">M</div>
<div class="a" style="left:352px;top:310px;width:13px;height:13px;border:1px solid #cfcfcf;background:#fff"></div>
<div class="t g" style="left:368px;top:310px;color:#888">Factura acogida a criterio de caja</div>
<div class="t" style="left:344px;top:338px">Más información</div>
<div class="a" style="left:352px;top:360px;width:99px;height:23px;border:1px solid #9a9a9a;background:#fff"></div>
<div class="t" style="left:360px;top:365px">Forma de pago:</div>
<div class="a" style="left:352px;top:384px;width:103px;height:23px;border:1px solid #9a9a9a;background:#fff"></div>
<div class="t" style="left:360px;top:389px">Banco de cargo:</div>
<div class="t" style="left:352px;top:414px">Código Cuenta Cliente:</div>
<div class="t" style="left:352px;top:438px">Código IBAN:</div>
<div class="t" style="left:352px;top:462px">Observaciones:</div>
<div class="t" style="left:352px;top:536px">Documento rectificado:</div>
<div class="a" style="left:512px;top:362px;width:40px;height:19px;border:1px solid #555;background:#fff"></div>
<div class="a" style="left:512px;top:386px;width:40px;height:19px;border:1px solid #d6d6d6;background:#fff"></div>
<div class="a" style="left:512px;top:410px;width:40px;height:19px;border:1px solid #d6d6d6;background:#fff"></div>
<div class="a" style="left:512px;top:434px;width:40px;height:19px;border:1px solid #d6d6d6;background:#fff"></div>
<div class="a" style="left:512px;top:458px;width:40px;height:19px;border:1px solid #d6d6d6;background:#fff"></div>
<div class="a" style="left:512px;top:482px;width:40px;height:19px;border:1px solid #d6d6d6;background:#fff"></div>
<div class="a" style="left:512px;top:505px;width:40px;height:23px;border:1px solid #9a9a9a;background:#f0f0f0"></div>
<div class="a" style="left:512px;top:532px;width:40px;height:21px;border:1px solid #d6d6d6;background:#fff"></div>
<div class="a" style="left:1000px;top:362px;width:325px;height:153px;border:1px solid #6e6e6e;background:#fff"></div>
<div class="a" style="left:1001px;top:390px;width:323px;height:1px;background:#c8c8c8"></div>
<div class="a" style="left:1188px;top:363px;width:1px;height:27px;background:#c8c8c8"></div>
<div class="t" style="left:1218px;top:370px;width:100px;text-align:right;font-size:10.4px">IMPORTE</div>
<div class="a" style="left:337px;top:661px;width:1022px;height:75px;background:#f0f0f0"></div>
<div class="t" style="left:349px;top:664px;color:#7a7a7a">Unidades:</div>
<div class="t" style="left:431px;top:664px;width:60px;text-align:right">0,00</div>
<div class="t" style="left:497px;top:664px;color:#7a7a7a">Neto:</div>
<div class="t" style="left:349px;top:680px;color:#7a7a7a">Art. diferentes:</div>
<div class="t" style="left:497px;top:680px;color:#7a7a7a">Total:</div>
<div class="t" style="left:349px;top:698px">F1 buscar forma de pago, F2 ir a importes</div>
<div class="t" style="left:993px;top:664px;color:#7a7a7a">Nº probable:</div>
<div class="t" style="left:1069px;top:664px">1 - 000002</div>
<div class="t" style="left:1071px;top:718px;font-size:10px">[SUPERVISOR]</div>
<div class="t" style="left:1209px;top:718px;font-size:10px">[SUPERVISOR]</div>
<!-- ============ NESTED DIALOG ============ -->
<div class="a" style="left:523px;top:249px;width:597px;height:329px;border:1px solid #7a7a7a;background:#fff"></div>
<div class="a" style="left:539px;top:249px;width:83px;height:44px;border:1px solid #8a8a8a;background:#f0f0f0"></div>
<svg style="left:539px;top:249px" width="83" height="44">
 <g fill="none" stroke="#b8b8b8" stroke-width="1">
  <rect x="8.5" y="7.5" width="29" height="28"/>
  <circle cx="30" cy="14" r="2.5"/>
  <path d="M9 29c5-6 9-7 14-2s9 8 14 6M20 31c4-4 10-4 17 1"/>
  <rect x="42.5" y="11.5" width="15" height="4"/><rect x="60.5" y="11.5" width="14" height="4"/>
  <path d="M42 8.5h16M60 8.5h6M42 18.5h16"/>
  <rect x="42.5" y="21.5" width="24" height="4"/><rect x="69.5" y="21.5" width="5" height="4"/>
  <rect x="42.5" y="28.5" width="32" height="4"/>
 </g>
</svg>
<div class="t" style="left:761px;top:257px;font-size:11.8px">Conceptos de los suplidos</div>
<svg style="left:1090px;top:250px" width="30" height="25"><path d="M9.5 6.8l9 9M18.5 6.8l-9 9" stroke="#333" stroke-width="1.9"/></svg>
<div class="t" style="left:536px;top:310px">Conceptos y datos de los suplidos.</div>
<!-- tabs -->
<div class="a" style="left:532px;top:354px;width:579px;height:171px;border:1px solid #d9d9d9;background:#fff;box-shadow:1px 1px 0 #eee"></div>
<div class="a" style="left:596px;top:337px;width:61px;height:18px;border:1px solid #d9d9d9;background:#f0f0f0"></div>
<div class="a" style="left:656px;top:337px;width:62px;height:18px;border:1px solid #d9d9d9;background:#f0f0f0"></div>
<div class="a" style="left:717px;top:337px;width:62px;height:18px;border:1px solid #d9d9d9;background:#f0f0f0"></div>
<div class="a" style="left:778px;top:337px;width:62px;height:18px;border:1px solid #d9d9d9;background:#f0f0f0"></div>
<div class="a" style="left:839px;top:337px;width:60px;height:18px;border:1px solid #d9d9d9;background:#f0f0f0"></div>
<div class="a" style="left:532px;top:334px;width:65px;height:21px;border:1px solid #d9d9d9;border-bottom:none;background:#fff"></div>
<div class="t" style="left:540px;top:337px">Suplido 1</div>
<div class="t" style="left:601px;top:339px">Suplido 2</div>
<div class="t" style="left:662px;top:339px">Suplido 3</div>
<div class="t" style="left:723px;top:339px">Suplido 4</div>
<div class="t" style="left:784px;top:339px">Suplido 5</div>
<div class="t" style="left:845px;top:339px">Suplido 6</div>
<div class="t" style="left:560px;top:372px">Fecha de pago:</div>
<div class="t" style="left:560px;top:396px">Perceptor:</div>
<div class="t" style="left:560px;top:420px">Identificación fiscal:</div>
<div class="t" style="left:560px;top:444px">Factura perceptor:</div>
<div class="t" style="left:560px;top:468px">Concepto:</div>
<div class="t" style="left:560px;top:492px">Importe:</div>
<div class="a" style="left:680px;top:368px;width:84px;height:19px;border:1px solid #555;background:#fff"></div>
<div class="a" style="left:745px;top:369px;width:18px;height:17px;background:#f0f0f0"></div>
<div class="a" style="left:682px;top:371px;width:1px;height:13px;background:#000"></div>
<div class="arr" style="left:751px;top:377px;border-top-color:#000;border-left-width:3.5px;border-right-width:3.5px;border-top-width:3.5px"></div>
<div class="fld" style="left:680px;top:392px;width:320px"></div>
<div class="fld" style="left:680px;top:416px;width:192px"></div>
<div class="a" style="left:853px;top:417px;width:18px;height:17px;background:#f0f0f0"></div>
<div class="arr" style="left:859px;top:425px;border-top-color:#000;border-left-width:3.5px;border-right-width:3.5px;border-top-width:3.5px"></div>
<div class="fld" style="left:876px;top:416px;width:124px"></div>
<div class="fld" style="left:680px;top:440px;width:192px"></div>
<div class="fld" style="left:680px;top:464px;width:412px"></div>
<div class="fld" style="left:680px;top:488px;width:84px">0,00</div>
<!-- footer -->
<div class="a" style="left:524px;top:539px;width:595px;height:38px;background:#f0f0f0"></div>
<div class="btn" style="left:940px;top:547px;width:75px;height:23px;line-height:22px;background:#f3f3f3;border-color:#9a9a9a">Aceptar</div>
<div class="btn" style="left:1032px;top:547px;width:75px;height:23px;line-height:22px;background:#f3f3f3;border-color:#9a9a9a">Cancelar</div>

</body></html>
